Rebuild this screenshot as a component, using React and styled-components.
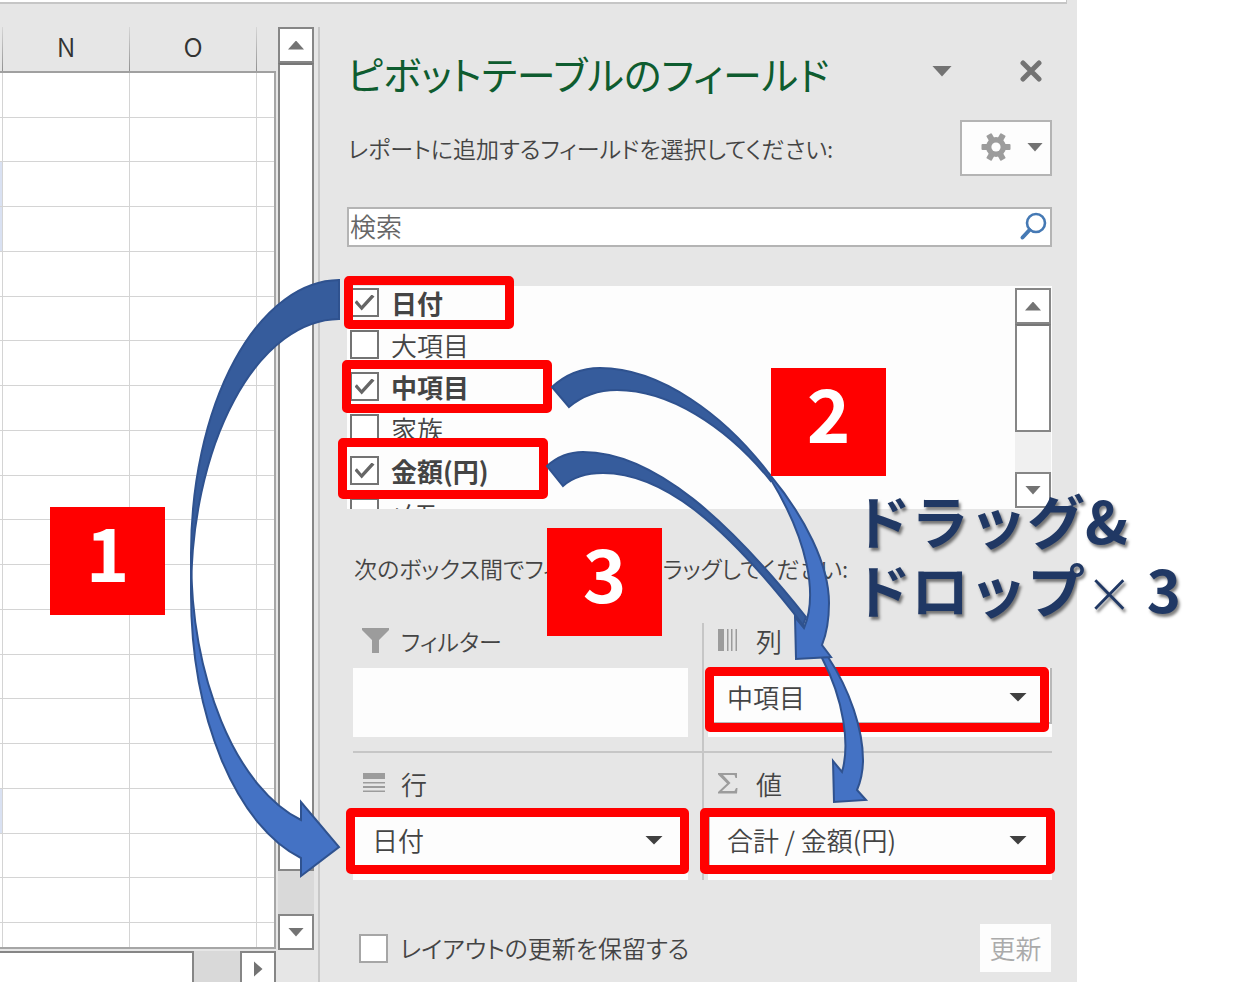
import React from "react";
import styled, { createGlobalStyle } from "styled-components";

const GlobalStyle = createGlobalStyle`
  *, *::before, *::after { box-sizing: border-box; }
  body {
    margin: 0;
    background: #fff;
    color: #444;
    font-family: "Noto Sans CJK JP", "Noto Sans", sans-serif;
    font-size: 26px;
    line-height: 36px;
    font-weight: 350;
    font-feature-settings: "palt";
  }
  button, input, select {
    font: inherit;
    font-feature-settings: inherit;
    color: inherit;
    margin: 0;
    padding: 0;
    border: 0;
    border-radius: 0;
    appearance: none;
    background: none;
  }
`;

const Page = styled.div`
  position: relative;
  min-height: 100vh;
  display: grid;
  grid-template-columns: minmax(0, 1fr) 163px;
  overflow: hidden;
`;

const Window = styled.div`
  display: flex;
  flex-direction: column;
  background: #e6e6e6;
`;

const FormulaBar = styled.div`
  height: 4px;
  margin-right: 10px;
  background: #fff;
  border-right: 1px solid #c6c6c6;
  border-bottom: 2px solid #c6c6c6;
`;

const Body = styled.div`
  flex: 1;
  display: flex;
`;

/* Worksheet */

const SheetArea = styled.section`
  width: 320px;
  flex: none;
  display: flex;
  gap: 2px;
  padding-top: 23px;
`;

const SheetColumn = styled.div`
  flex: 1;
  display: flex;
  flex-direction: column;
`;

const Grid = styled.table`
  flex: 1;
  display: flex;
  flex-direction: column;
  border-right: 2px solid #a6a6a6;
  border-bottom: 2px solid #a6a6a6;
`;

const GridHead = styled.thead`
  display: block;
  background: #e6e6e6;
  border-bottom: 2px solid #a0a0a0;
  margin-right: -2px;
  padding-right: 2px;
`;

const GridBody = styled.tbody`
  flex: 1;
  display: grid;
  grid-template-rows: repeat(19, minmax(0, 45fr)) minmax(0, 24fr);
  background: #fff;
`;

const GridRow = styled.tr`
  display: grid;
  grid-template-columns: 3px 1fr 1fr 17px;
`;

const HeadCell = styled.th`
  height: 44px;
  padding: 1px 0 0;
  font-weight: 350;
  line-height: 36px;
  color: #333;
  border-right: ${(p) => (p.$last ? 0 : 1)}px solid;
  border-image: linear-gradient(#d8d8d8, #909090) 1;
`;

const Cell = styled.td`
  padding: 0;
  background: ${(p) => (p.$marked ? "#d9e1f2" : "transparent")};
  border-right: ${(p) => (p.$last ? 0 : 1)}px solid #d4d4d4;
  border-bottom: ${(p) => (p.$bottom ? 0 : 1)}px solid #d4d4d4;
`;

const HorizontalBar = styled.div`
  display: flex;
  height: 31px;
  margin-top: 2px;
  background: #d9d9d9;
`;

const HorizontalThumb = styled.div`
  width: 194px;
  background: #fff;
  border: solid #868686;
  border-width: 2px 2px 0 0;
  margin-right: auto;
`;

const ScrollButton = styled.button`
  flex: none;
  display: grid;
  place-items: center;
  width: 36px;
  height: 36px;
  background: #fff;
  border: 2px solid #868686;
`;

const VerticalBar = styled.div`
  display: flex;
  flex-direction: column;
  width: 36px;
  background: ${(p) => p.$track};
`;

const SheetBar = styled(VerticalBar)`
  margin-bottom: 32px;
`;

const VerticalThumb = styled.div`
  flex: ${(p) => p.$share};
  background: #fff;
  border: 2px solid #868686;
  border-top-color: #777;
`;

const VerticalTrack = styled.div`
  flex: ${(p) => p.$share};
`;

const Splitter = styled.div`
  width: 2px;
  margin-left: 2px;
  background: #c8c8c8;
`;

const Triangle = styled.span`
  width: ${(p) => p.$w || 16}px;
  height: ${(p) => p.$h || 9}px;
  background: ${(p) => p.$color || "#737373"};
  clip-path: polygon(${(p) =>
    p.$dir === "up" ? "50% 0, 100% 100%, 0 100%" : p.$dir === "right" ? "0 0, 100% 50%, 0 100%" : "0 0, 100% 0, 50% 100%"});
`;

/* Field pane */

const Pane = styled.aside`
  flex: 1;
  min-width: 0;
  display: flex;
  flex-direction: column;
  padding: 40px 25px 10px 27px;
`;

const PaneHeader = styled.header`
  display: flex;
  align-items: center;
  height: 62px;
`;

const Title = styled.h1`
  flex: 1;
  margin: 0;
  padding-bottom: 4px;
  font-size: 39px;
  line-height: 60px;
  font-weight: 400;
  color: #0e5c2f;
  white-space: nowrap;
`;

const HeaderButton = styled.button`
  display: grid;
  place-items: center;
  width: 42px;
  height: 42px;
  margin: 0 0 8px 47px;
`;

const HeaderActions = styled.div`
  display: flex;
`;

const Description = styled.div`
  display: flex;
  align-items: center;
  justify-content: space-between;
  margin-top: 14px;
  padding-left: 1px;
`;

const Text = styled.p`
  margin: 0;
  font-size: 23px;
  white-space: nowrap;
`;

const ToolsButton = styled.button`
  display: flex;
  align-items: center;
  justify-content: space-between;
  width: 92px;
  height: 56px;
  padding: 0 7px 2px 19px;
  background: #fdfdfd;
  border: 2px solid #b4b4b4;
`;

const SearchBox = styled.label`
  display: flex;
  align-items: center;
  height: 40px;
  margin-top: 31px;
  padding: 0 3px 0 1px;
  background: #fff;
  border: 2px solid #b4b4b4;
`;

const SearchInput = styled.input`
  flex: 1;
  min-width: 0;
  height: 36px;
  padding-bottom: 2px;
  outline: none;
  &::placeholder { color: #666; opacity: 1; }
`;

const FieldList = styled.div`
  display: flex;
  height: 223px;
  margin-top: 39px;
  padding: 2px 1px 0 3px;
  background: #fdfdfd;
  overflow: hidden;
`;

const Fields = styled.ul`
  flex: 1;
  margin: 0;
  padding: 0;
  list-style: none;
`;

const Check = styled.label`
  display: flex;
  align-items: center;
  gap: 12px;
  height: 42px;
  padding-bottom: 13px;
  font-weight: ${(p) => (p.$bold ? 700 : 350)};
  white-space: nowrap;
`;

const CheckBox = styled.input`
  flex: none;
  display: grid;
  place-items: center;
  width: 29px;
  height: 29px;
  background: #fff;
  border: 2px solid ${(p) => p.$tone || "#737373"};
  &:checked::before {
    content: "";
    width: 20px;
    height: 16px;
    background: #666;
    clip-path: polygon(0 50%, 12% 36%, 35% 70%, 86% 0, 100% 12%, 36% 100%);
  }
`;

const ListBar = styled(VerticalBar)`
  margin-bottom: 1px;
`;

const DragHint = styled(Text)`
  margin-top: 41px;
  padding-left: 7px;
`;

const Areas = styled.div`
  display: grid;
  grid-template-columns: 349fr 350fr;
  margin: 37px 0 0 6px;
`;

const Area = styled.section`
  padding: ${(p) => (p.$right ? "0 0 0 4px" : "0 14px 0 0")};
  border-left: ${(p) => (p.$right ? "2px solid #c6c6c6" : "0")};
`;

const AreaTop = styled(Area)`
  padding-bottom: 14px;
`;

const AreaBottom = styled(Area)`
  position: relative;
  padding-top: 15px;
  &::before {
    content: "";
    position: absolute;
    inset: 0 0 auto 0;
    height: 2px;
    background: #c6c6c6;
  }
`;

const AreaHeading = styled.h2`
  display: flex;
  align-items: center;
  margin: 0;
  padding: 0 0 9px 9px;
  font-size: ${(p) => (p.$small ? 23 : 26)}px;
  line-height: 36px;
  font-weight: 350;
`;

const IconSlot = styled.span`
  display: flex;
  align-items: center;
  width: 39px;
`;

const DropBox = styled.div`
  height: 69px;
  background: #fdfdfd;
`;

const Chip = styled.div`
  display: grid;
  align-items: center;
  border: solid #b8b8b8;
  border-width: 0 2px 2px;
  & > * { grid-area: 1 / 1; }
  & > span { justify-self: end; margin: 4px 23px 0 0; pointer-events: none; }
`;

const ChipSelect = styled.select`
  width: 100%;
  height: 54px;
  padding: 4px 50px 0 17px;
`;

const Footer = styled.footer`
  display: flex;
  align-items: center;
  justify-content: space-between;
  margin-top: 44px;
  padding: 0 1px 0 12px;
  font-size: 24px;
  & > label { height: 30px; padding: 0; }
`;

const UpdateButton = styled.button`
  width: 71px;
  height: 48px;
  font-size: 26px;
  background: #fdfdfd;
  &:disabled { color: #aaa; }
`;

/* Callouts placed over the window */

const Frame = styled.div`
  position: absolute;
  left: ${(p) => p.$x}px;
  top: ${(p) => p.$y}px;
  width: ${(p) => p.$w}px;
  height: ${(p) => p.$h}px;
  border: 9px solid #f00;
  border-radius: 5px;
  pointer-events: none;
`;

const Arrows = styled.svg`
  position: absolute;
  left: 0;
  top: 0;
  pointer-events: none;
`;

const Step = styled.div`
  position: absolute;
  left: ${(p) => p.$x}px;
  top: ${(p) => p.$y}px;
  width: 115px;
  height: 108px;
  background: #f00;
  color: #fff;
  font-size: 74px;
  line-height: 86px;
  font-weight: 700;
  text-align: center;
`;

const Caption = styled.p`
  position: absolute;
  left: 853px;
  top: 485px;
  margin: 0;
  font-size: 58px;
  line-height: 69px;
  font-weight: 700;
  font-feature-settings: normal;
  color: #203864;
  text-shadow: 2px 3px 3px rgba(0, 0, 0, 0.5);
  white-space: nowrap;
`;

const Times = styled.span`
  font-family: "DejaVu Sans", sans-serif;
  font-weight: 200;
`;

const rows = Array.from({ length: 20 }, (_, i) => i);
const markedRows = [2, 3, 16];

const fields = [
  { name: "日付", on: true },
  { name: "大項目", on: false },
  { name: "中項目", on: true },
  { name: "家族", on: false },
  { name: "金額(円)", on: true },
  { name: "メモ", on: false },
];

const frames = [
  [344, 276, 170, 53],
  [342, 360, 210, 53],
  [338, 438, 210, 61],
  [705, 667, 344, 65],
  [346, 808, 343, 66],
  [700, 808, 355, 66],
];

const GearIcon = () => (
  <svg width="30" height="28" viewBox="-15 -14 30 28" aria-hidden="true">
    <g fill="#9c9c9c">
      {[0, 60, 120].map((a) => (
        <rect key={a} x="-14.5" y="-3" width="29" height="6" rx="1" transform={`rotate(${a})`} />
      ))}
      <circle r="10" />
    </g>
    <circle r="4.6" fill="#fdfdfd" />
  </svg>
);

const SearchIcon = () => (
  <svg width="28" height="30" viewBox="0 0 28 30" fill="none" stroke="#4579b4" aria-hidden="true">
    <circle cx="17" cy="11" r="9" strokeWidth="2.6" />
    <path d="M10.500 18L3.500 25.500" strokeWidth="4" strokeLinecap="round" />
  </svg>
);

const CloseIcon = () => (
  <svg width="22" height="22" viewBox="0 0 22 22" aria-hidden="true">
    <path d="M3 3L19 19M19 3L3 19" stroke="#737373" strokeWidth="5" strokeLinecap="round" />
  </svg>
);

const FilterIcon = () => (
  <svg width="27" height="26" viewBox="0 0 27 26" aria-hidden="true">
    <path d="M0 0H27V2L17 12V25H10V12L0 2Z" fill="#9c9c9c" />
  </svg>
);

const RowsIcon = () => (
  <svg width="24" height="24" viewBox="0 0 24 24" fill="#9c9c9c" aria-hidden="true">
    <path d="M1 1H23V7H1ZM1 10H23V11.500H1ZM1 14H23V16H1ZM1 18.500H23V20H1Z" />
  </svg>
);

const ColumnsIcon = () => (
  <svg width="22" height="24" viewBox="0 0 22 24" fill="#9c9c9c" aria-hidden="true">
    <path d="M1 0H7V22H1ZM10 0H11.500V22H10ZM14 0H15.500V22H14ZM18.500 0H20V22H18.500Z" />
  </svg>
);

const SigmaIcon = () => (
  <svg width="22" height="24" viewBox="0 0 22 24" fill="#9c9c9c" aria-hidden="true">
    <path d="M1 1H20V6H18.500L17.500 3H6L13.500 11L5 19H17.500L19 16H20.500L20 21.500H1V20L10 11.500L1 2.500Z" />
  </svg>
);

const AreaField = ({ label, value }) => (
  <DropBox>
    {value && (
      <Chip>
        <ChipSelect aria-label={label} defaultValue={value}>
          <option>{value}</option>
        </ChipSelect>
        <Triangle $w={18} $color="#404040" />
      </Chip>
    )}
  </DropBox>
);

const Worksheet = () => (
  <SheetArea>
    <SheetColumn>
      <Grid cellSpacing="0">
        <GridHead>
          <GridRow>
            <HeadCell />
            <HeadCell scope="col">N</HeadCell>
            <HeadCell scope="col">O</HeadCell>
            <HeadCell $last />
          </GridRow>
        </GridHead>
        <GridBody>
          {rows.map((r) => (
            <GridRow key={r}>
              <Cell $marked={markedRows.includes(r)} $bottom={r === 19} />
              <Cell $bottom={r === 19} />
              <Cell $bottom={r === 19} />
              <Cell $last $bottom={r === 19} />
            </GridRow>
          ))}
        </GridBody>
      </Grid>
      <HorizontalBar>
        <HorizontalThumb />
        <ScrollButton aria-label="右へ">
          <Triangle $dir="right" $w={9} $h={16} />
        </ScrollButton>
      </HorizontalBar>
    </SheetColumn>
    <SheetBar $track="#d9d9d9">
      <ScrollButton aria-label="上へ"><Triangle $dir="up" /></ScrollButton>
      <VerticalThumb $share={808} />
      <VerticalTrack $share={43} />
      <ScrollButton aria-label="下へ"><Triangle /></ScrollButton>
    </SheetBar>
    <Splitter />
  </SheetArea>
);

const FieldPane = () => (
  <Pane>
    <PaneHeader>
      <Title>ピボットテーブルのフィールド</Title>
      <HeaderActions>
        <HeaderButton aria-label="オプション"><Triangle $w={20} $h={11} /></HeaderButton>
        <HeaderButton aria-label="閉じる"><CloseIcon /></HeaderButton>
      </HeaderActions>
    </PaneHeader>
    <Description>
      <Text>レポートに追加するフィールドを選択してください:</Text>
      <ToolsButton aria-label="ツール">
        <GearIcon />
        <Triangle />
      </ToolsButton>
    </Description>
    <SearchBox>
      <SearchInput type="text" placeholder="検索" aria-label="検索" />
      <SearchIcon />
    </SearchBox>
    <FieldList>
      <Fields>
        {fields.map((f) => (
          <li key={f.name}>
            <Check $bold={f.on}>
              <CheckBox type="checkbox" defaultChecked={f.on} />
              {f.name}
            </Check>
          </li>
        ))}
      </Fields>
      <ListBar $track="#f0f0f0">
        <ScrollButton aria-label="上へ"><Triangle $dir="up" /></ScrollButton>
        <VerticalThumb $share={107} />
        <VerticalTrack $share={41} />
        <ScrollButton aria-label="下へ"><Triangle /></ScrollButton>
      </ListBar>
    </FieldList>
    <DragHint>次のボックス間でフィールドをドラッグしてください:</DragHint>
    <Areas>
      <AreaTop>
        <AreaHeading $small><IconSlot><FilterIcon /></IconSlot>フィルター</AreaHeading>
        <AreaField label="フィルター" />
      </AreaTop>
      <AreaTop $right>
        <AreaHeading><IconSlot><ColumnsIcon /></IconSlot>列</AreaHeading>
        <AreaField label="列" value="中項目" />
      </AreaTop>
      <AreaBottom>
        <AreaHeading><IconSlot><RowsIcon /></IconSlot>行</AreaHeading>
        <AreaField label="行" value="日付" />
      </AreaBottom>
      <AreaBottom $right>
        <AreaHeading><IconSlot><SigmaIcon /></IconSlot>値</AreaHeading>
        <AreaField label="値" value="合計 / 金額(円)" />
      </AreaBottom>
    </Areas>
    <Footer>
      <Check>
        <CheckBox type="checkbox" $tone="#a6a6a6" />
        レイアウトの更新を保留する
      </Check>
      <UpdateButton disabled>更新</UpdateButton>
    </Footer>
  </Pane>
);

const Callouts = () => (
  <>
    {frames.map(([x, y, w, h]) => (
      <Frame key={`${x}-${y}`} $x={x} $y={y} $w={w} $h={h} />
    ))}
    <Arrows width="900" height="900" viewBox="0 0 900 900" stroke="#2f528f" strokeWidth="2" aria-hidden="true">
      <path fill="#4472c4" d="M191 553L191 593A149 274 0 0 0 301 858L301 876L339 847L301 802L301 820A149 274 0 0 1 191 553Z" />
      <path fill="#365c9c" d="M339 280A149 274 0 0 0 191 553L191 593A149 274 0 0 1 339 319Z" />
      <path fill="#4472c4" d="M828 657C850 690 863 730 863 760C863 773 860 783 857 790L866 800L834 802L833 761L842 772C850 745 844 700 822 658L803 625Z" />
      <path fill="#365c9c" d="M547 466C558 456 570 452 583 452C655 452 730 522 806 617L803 625C728 528 665 473 603 473C585 473 573 477 563 486Z" />
      <path fill="#4472c4" d="M770 475C805 517 829 565 829 603C829 620 826 635 822 645L831 657L796 659L795 617L804 628C818 595 808 540 770 478Z" />
      <path fill="#365c9c" d="M552 387C565 375 582 368 600 368C660 368 725 415 770 475L770 480C725 425 668 390 617 390C598 390 582 396 569 407Z" />
    </Arrows>
    <Step $x={50} $y={507}>1</Step>
    <Step $x={771} $y={368}>2</Step>
    <Step $x={547} $y={528}>3</Step>
    <Caption>
      ドラッグ&amp;
      <br />
      ドロップ<Times>×</Times> 3
    </Caption>
  </>
);

export default function App() {
  return (
    <Page>
      <GlobalStyle />
      <Window>
        <FormulaBar />
        <Body>
          <Worksheet />
          <FieldPane />
        </Body>
      </Window>
      <Callouts />
    </Page>
  );
}
